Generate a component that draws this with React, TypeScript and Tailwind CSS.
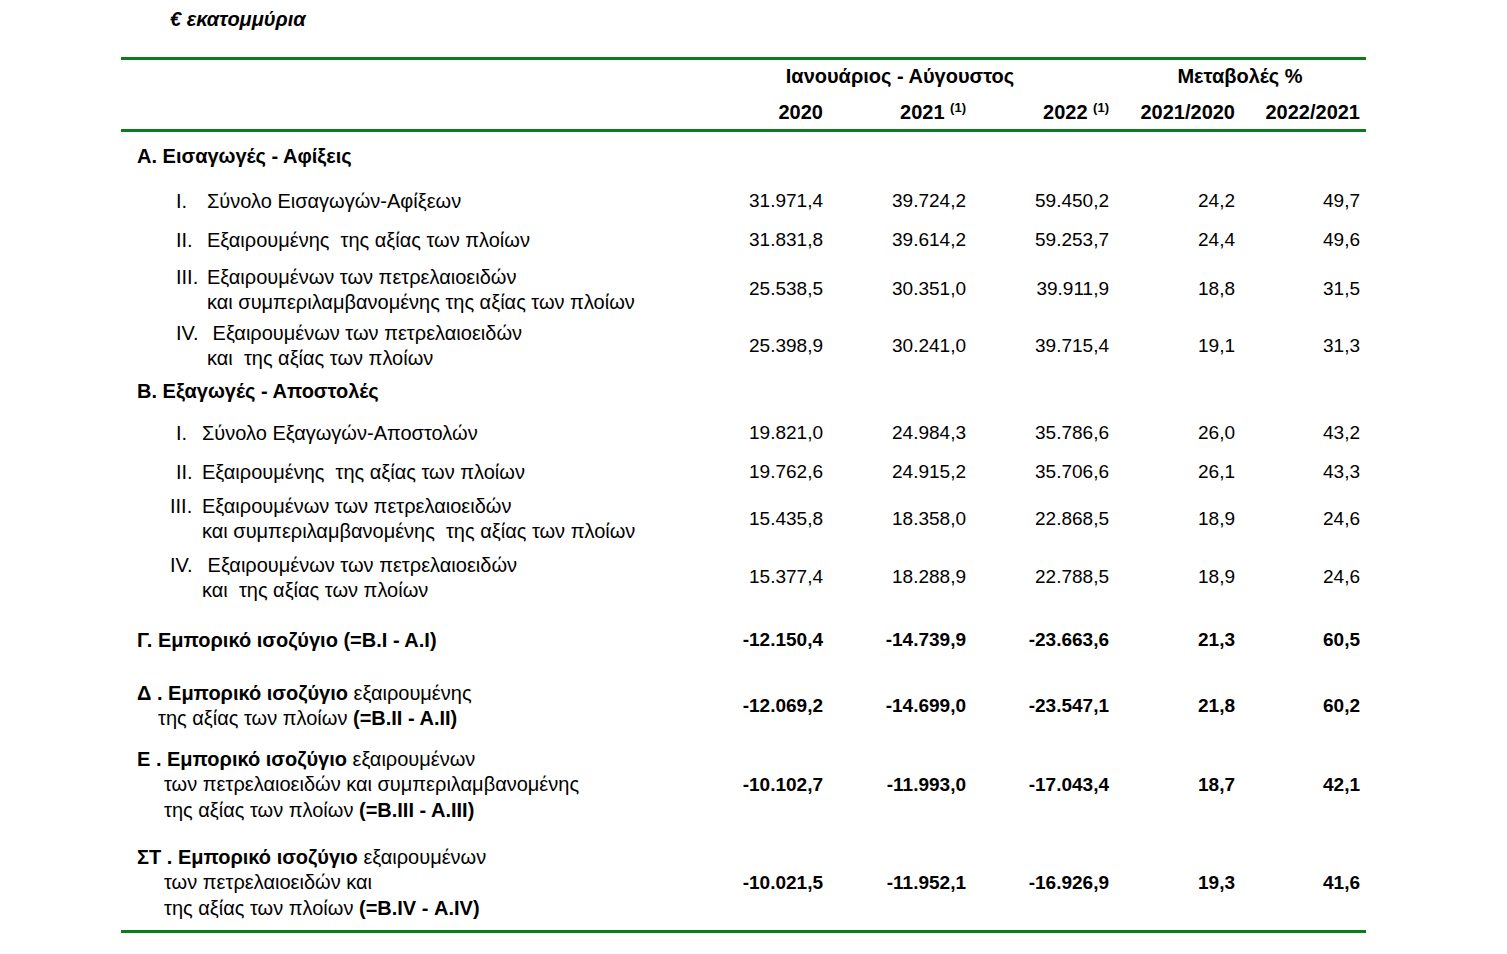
import type { ReactNode } from "react";

type Row = {
	label: ReactNode;
	values?: string[];
	bold?: boolean;
	box: string;
};

function Line() {
	return <div className="h-[3px] w-full bg-[#0a7c1f]" />;
}

function Item({
	num,
	numBox,
	lines
}: {
	num: string;
	numBox: string;
	lines: ReactNode[];
}) {
	return (
		<div className="flex items-baseline leading-[25px]">
			<span className={numBox}>{num}</span>
			<div className="flex flex-col">
				{lines.map((l, i) => (
					<span key={i} className="whitespace-pre">
						{l}
					</span>
				))}
			</div>
		</div>
	);
}

function Balance({ lines, indent }: { lines: ReactNode[]; indent: string }) {
	return (
		<div className="flex flex-col pl-[16px] leading-[25.5px]">
			{lines.map((l, i) => (
				<span key={i} className={i === 0 ? "whitespace-pre" : `whitespace-pre ${indent}`}>
					{l}
				</span>
			))}
		</div>
	);
}

const rows: Row[] = [
	{
		label: <span className="pl-[16px] font-bold">Α. Εισαγωγές - Αφίξεις</span>,
		box: "h-[48px]"
	},
	{
		label: (
			<Item num="I." numBox="ml-[55px] w-[31px]" lines={["Σύνολο Εισαγωγών-Αφίξεων"]} />
		),
		values: ["31.971,4", "39.724,2", "59.450,2", "24,2", "49,7"],
		box: "h-[40px] pt-[2px]"
	},
	{
		label: (
			<Item num="II." numBox="ml-[55px] w-[31px]" lines={["Εξαιρουμένης  της αξίας των πλοίων"]} />
		),
		values: ["31.831,8", "39.614,2", "59.253,7", "24,4", "49,6"],
		box: "h-[38px] pt-[2px]"
	},
	{
		label: (
			<Item
				num="III."
				numBox="ml-[55px] w-[31px]"
				lines={["Εξαιρουμένων των πετρελαιοειδών", "και συμπεριλαμβανομένης της αξίας των πλοίων"]}
			/>
		),
		values: ["25.538,5", "30.351,0", "39.911,9", "18,8", "31,5"],
		box: "h-[61px] pt-[2px]"
	},
	{
		label: (
			<Item
				num="IV."
				numBox="ml-[55px] w-[31px]"
				lines={[" Εξαιρουμένων των πετρελαιοειδών", "και  της αξίας των πλοίων"]}
			/>
		),
		values: ["25.398,9", "30.241,0", "39.715,4", "19,1", "31,3"],
		box: "h-[49px] pt-[2px]"
	},
	{
		label: <span className="pl-[16px] font-bold">Β. Εξαγωγές - Αποστολές</span>,
		box: "h-[46px]"
	},
	{
		label: <Item num="I." numBox="ml-[55px] w-[26px]" lines={["Σύνολο Εξαγωγών-Αποστολών"]} />,
		values: ["19.821,0", "24.984,3", "35.786,6", "26,0", "43,2"],
		box: "h-[36px] pt-[2px]"
	},
	{
		label: (
			<Item num="II." numBox="ml-[55px] w-[26px]" lines={["Εξαιρουμένης  της αξίας των πλοίων"]} />
		),
		values: ["19.762,6", "24.915,2", "35.706,6", "26,1", "43,3"],
		box: "h-[42px] pt-[2px]"
	},
	{
		label: (
			<Item
				num="III."
				numBox="ml-[49px] w-[32px]"
				lines={["Εξαιρουμένων των πετρελαιοειδών", "και συμπεριλαμβανομένης  της αξίας των πλοίων"]}
			/>
		),
		values: ["15.435,8", "18.358,0", "22.868,5", "18,9", "24,6"],
		box: "h-[51px] pt-[2px]"
	},
	{
		label: (
			<Item
				num="IV."
				numBox="ml-[49px] w-[32px]"
				lines={[" Εξαιρουμένων των πετρελαιοειδών", "και  της αξίας των πλοίων"]}
			/>
		),
		values: ["15.377,4", "18.288,9", "22.788,5", "18,9", "24,6"],
		box: "h-[67px] pt-[2px]"
	},
	{
		label: <span className="pl-[16px] font-bold">Γ. Εμπορικό ισοζύγιο (=Β.Ι - Α.Ι)</span>,
		values: ["-12.150,4", "-14.739,9", "-23.663,6", "21,3", "60,5"],
		bold: true,
		box: "h-[60px]"
	},
	{
		label: (
			<Balance
				indent="pl-[21px]"
				lines={[
					<>
						<b>Δ . Εμπορικό ισοζύγιο</b> εξαιρουμένης
					</>,
					<>
						της αξίας των πλοίων <b>(=Β.ΙΙ - Α.ΙΙ)</b>
					</>
				]}
			/>
		),
		values: ["-12.069,2", "-14.699,0", "-23.547,1", "21,8", "60,2"],
		bold: true,
		box: "h-[72px]"
	},
	{
		label: (
			<Balance
				indent="pl-[27px]"
				lines={[
					<>
						<b>Ε . Εμπορικό ισοζύγιο</b> εξαιρουμένων
					</>,
					"των πετρελαιοειδών και συμπεριλαμβανομένης",
					<>
						της αξίας των πλοίων <b>(=Β.ΙΙΙ - Α.ΙΙΙ)</b>
					</>
				]}
			/>
		),
		values: ["-10.102,7", "-11.993,0", "-17.043,4", "18,7", "42,1"],
		bold: true,
		box: "h-[86px]"
	},
	{
		label: (
			<Balance
				indent="pl-[27px]"
				lines={[
					<>
						<b>ΣΤ . Εμπορικό ισοζύγιο</b> εξαιρουμένων
					</>,
					"των πετρελαιοειδών και",
					<>
						της αξίας των πλοίων <b>(=Β.ΙV - Α.ΙV)</b>
					</>
				]}
			/>
		),
		values: ["-10.021,5", "-11.952,1", "-16.926,9", "19,3", "41,6"],
		bold: true,
		box: "h-[102px] pt-[8px]"
	}
];

const cols = "grid grid-cols-[592px_110px_143px_143px_126px_125px] pr-[6px]";

export default function App() {
	return (
		<div className="min-h-[954px] w-[1507px] bg-white font-['Liberation_Sans',Arial,sans-serif] text-[20px] text-black">
			<div className="flex h-[38px] items-center pl-[170px] text-[20px] font-bold italic">
				€ εκατομμύρια
			</div>
			<div className="ml-[121px] mt-[19px] w-[1245px]">
				<Line />
				<div className={`${cols} h-[31px] items-center text-[20px] font-bold`}>
					<div />
					<div className="col-span-3 pr-[22px] text-center">Ιανουάριος - Αύγουστος</div>
					<div className="col-span-2 pl-[11px] text-center">Μεταβολές %</div>
				</div>
				<div className={`${cols} h-[38px] items-center pt-[3px] text-[20px] font-bold`}>
					<div />
					<div className="text-right">2020</div>
					<div className="text-right">
						2021 <sup className="text-[13px] font-semibold">(1)</sup>
					</div>
					<div className="text-right">
						2022 <sup className="text-[13px] font-semibold">(1)</sup>
					</div>
					<div className="text-right">2021/2020</div>
					<div className="text-right">2022/2021</div>
				</div>
				<Line />
				{rows.map((r, i) => (
					<div key={i} className={`${cols} ${r.box} items-center`}>
						<div>{r.label}</div>
						{(r.values ?? ["", "", "", "", ""]).map((v, j) => (
							<div
								key={j}
								className={r.bold ? "text-right text-[19px] font-bold" : "text-right text-[19px]"}
							>
								{v}
							</div>
						))}
					</div>
				))}
				<Line />
			</div>
		</div>
	);
}
